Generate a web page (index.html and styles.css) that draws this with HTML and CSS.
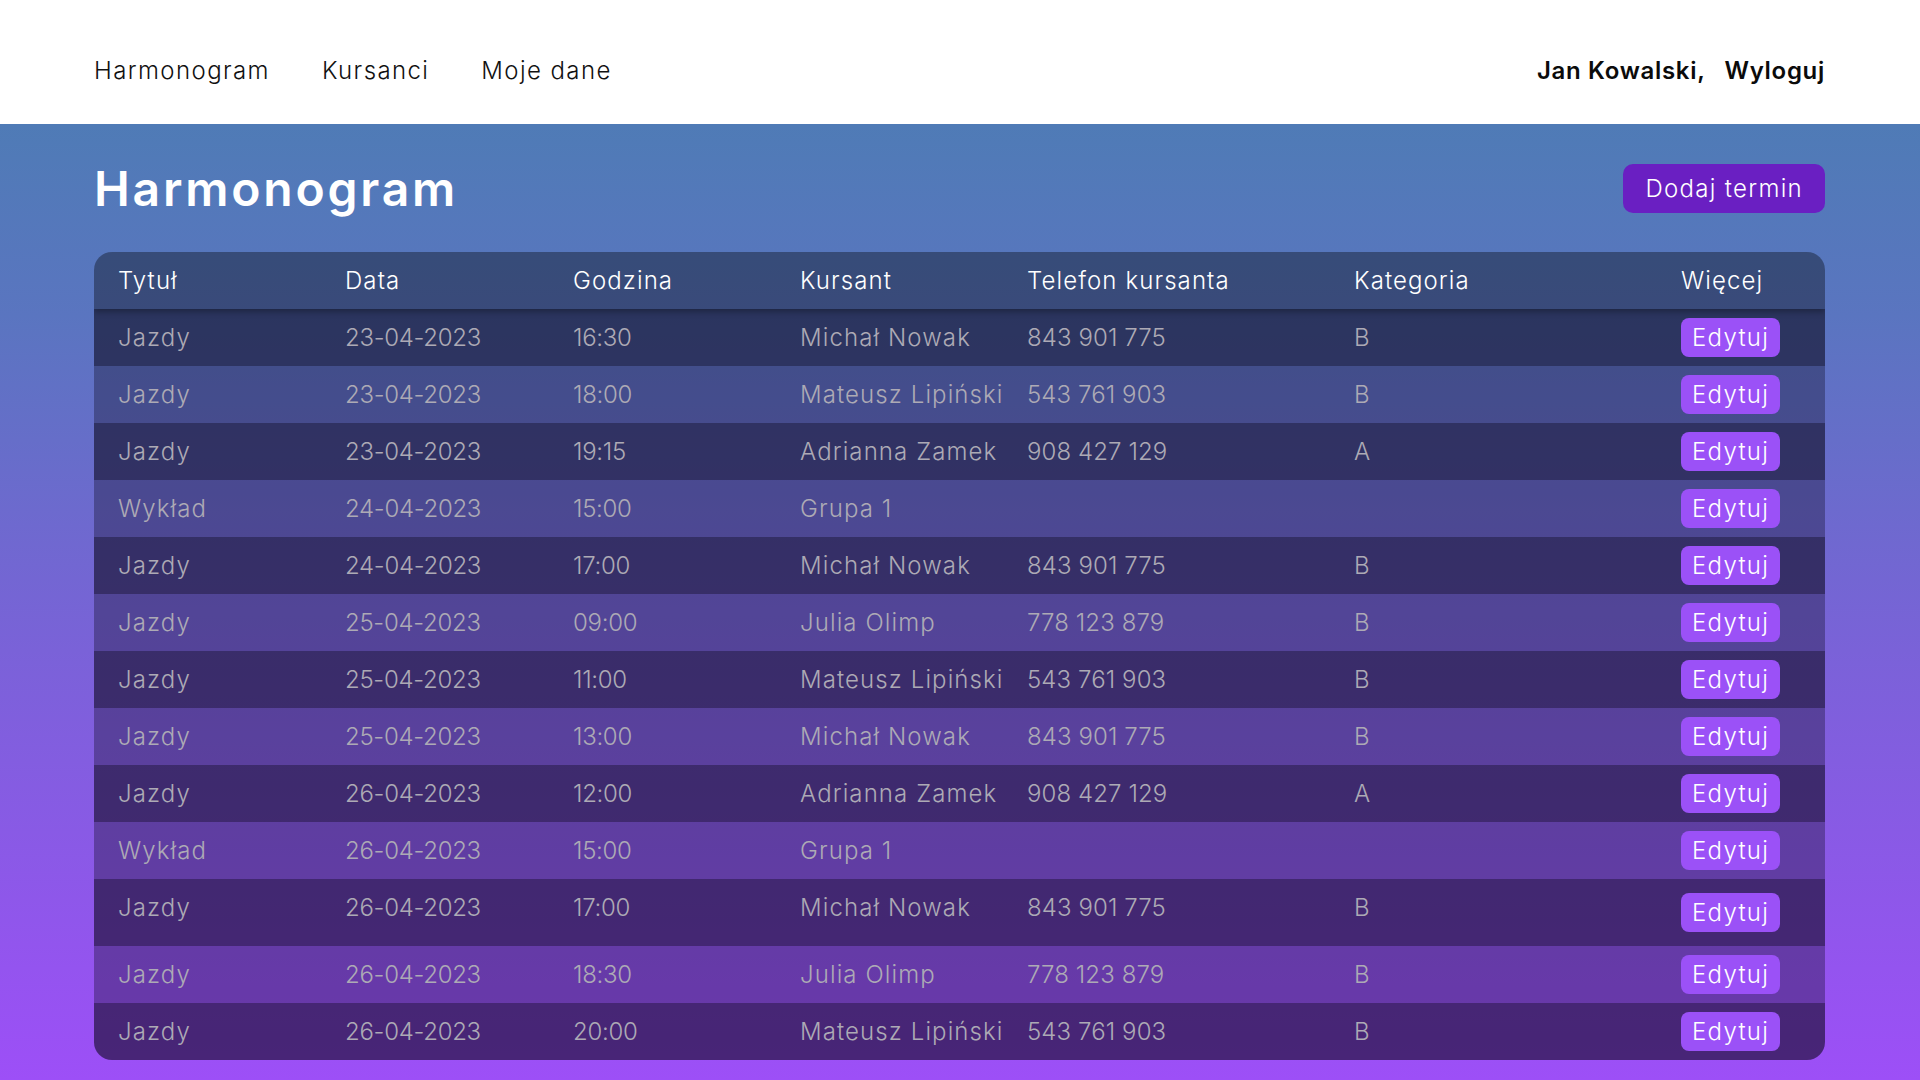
FILE: index.html
```html
<!DOCTYPE html>
<html lang="pl">
<head>
<meta charset="utf-8">
<title>Harmonogram</title>
<link rel="stylesheet" href="styles.css">
</head>
<body>
<header class="topbar">
  <nav class="nav">
    <a class="nav-link" href="#">Harmonogram</a>
    <a class="nav-link" href="#">Kursanci</a>
    <a class="nav-link" href="#">Moje dane</a>
  </nav>
  <div class="user">
    <span class="user-name">Jan Kowalski,</span>
    <a class="logout" href="#">Wyloguj</a>
  </div>
</header>
<main class="content">
  <div class="page-head">
    <h1 class="page-title">Harmonogram</h1>
    <button class="btn-add">Dodaj termin</button>
  </div>
  <div class="schedule">
    <div class="row head">
      <div class="cell">Tytuł</div><div class="cell">Data</div><div class="cell">Godzina</div><div class="cell">Kursant</div><div class="cell">Telefon kursanta</div><div class="cell">Kategoria</div><div class="cell">Więcej</div>
    </div>
    <div class="row dark">
      <div class="cell">Jazdy</div><div class="cell num">23-04-2023</div><div class="cell num">16:30</div><div class="cell">Michał Nowak</div><div class="cell phone">843 901 775</div><div class="cell">B</div><div class="cell action"><button class="btn-edit">Edytuj</button></div>
    </div>
    <div class="row light">
      <div class="cell">Jazdy</div><div class="cell num">23-04-2023</div><div class="cell num">18:00</div><div class="cell">Mateusz Lipiński</div><div class="cell phone">543 761 903</div><div class="cell">B</div><div class="cell action"><button class="btn-edit">Edytuj</button></div>
    </div>
    <div class="row dark">
      <div class="cell">Jazdy</div><div class="cell num">23-04-2023</div><div class="cell num">19:15</div><div class="cell">Adrianna Zamek</div><div class="cell phone">908 427 129</div><div class="cell">A</div><div class="cell action"><button class="btn-edit">Edytuj</button></div>
    </div>
    <div class="row light">
      <div class="cell">Wykład</div><div class="cell num">24-04-2023</div><div class="cell num">15:00</div><div class="cell">Grupa 1</div><div class="cell"></div><div class="cell"></div><div class="cell action"><button class="btn-edit">Edytuj</button></div>
    </div>
    <div class="row dark">
      <div class="cell">Jazdy</div><div class="cell num">24-04-2023</div><div class="cell num">17:00</div><div class="cell">Michał Nowak</div><div class="cell phone">843 901 775</div><div class="cell">B</div><div class="cell action"><button class="btn-edit">Edytuj</button></div>
    </div>
    <div class="row light">
      <div class="cell">Jazdy</div><div class="cell num">25-04-2023</div><div class="cell num">09:00</div><div class="cell">Julia Olimp</div><div class="cell phone">778 123 879</div><div class="cell">B</div><div class="cell action"><button class="btn-edit">Edytuj</button></div>
    </div>
    <div class="row dark">
      <div class="cell">Jazdy</div><div class="cell num">25-04-2023</div><div class="cell num">11:00</div><div class="cell">Mateusz Lipiński</div><div class="cell phone">543 761 903</div><div class="cell">B</div><div class="cell action"><button class="btn-edit">Edytuj</button></div>
    </div>
    <div class="row light">
      <div class="cell">Jazdy</div><div class="cell num">25-04-2023</div><div class="cell num">13:00</div><div class="cell">Michał Nowak</div><div class="cell phone">843 901 775</div><div class="cell">B</div><div class="cell action"><button class="btn-edit">Edytuj</button></div>
    </div>
    <div class="row dark">
      <div class="cell">Jazdy</div><div class="cell num">26-04-2023</div><div class="cell num">12:00</div><div class="cell">Adrianna Zamek</div><div class="cell phone">908 427 129</div><div class="cell">A</div><div class="cell action"><button class="btn-edit">Edytuj</button></div>
    </div>
    <div class="row light">
      <div class="cell">Wykład</div><div class="cell num">26-04-2023</div><div class="cell num">15:00</div><div class="cell">Grupa 1</div><div class="cell"></div><div class="cell"></div><div class="cell action"><button class="btn-edit">Edytuj</button></div>
    </div>
    <div class="row dark tall">
      <div class="cell">Jazdy</div><div class="cell num">26-04-2023</div><div class="cell num">17:00</div><div class="cell">Michał Nowak</div><div class="cell phone">843 901 775</div><div class="cell">B</div><div class="cell action"><button class="btn-edit">Edytuj</button></div>
    </div>
    <div class="row light">
      <div class="cell">Jazdy</div><div class="cell num">26-04-2023</div><div class="cell num">18:30</div><div class="cell">Julia Olimp</div><div class="cell phone">778 123 879</div><div class="cell">B</div><div class="cell action"><button class="btn-edit">Edytuj</button></div>
    </div>
    <div class="row dark">
      <div class="cell">Jazdy</div><div class="cell num">26-04-2023</div><div class="cell num">20:00</div><div class="cell">Mateusz Lipiński</div><div class="cell phone">543 761 903</div><div class="cell">B</div><div class="cell action"><button class="btn-edit">Edytuj</button></div>
    </div>
  </div>
</main>
</body>
</html>
```
FILE: styles.css
```css
* { box-sizing: border-box; }
html, body { margin: 0; padding: 0; }
body {
  width: 1920px;
  height: 1080px;
  overflow: hidden;
  font-family: Inter, "Noto Sans", "DejaVu Sans", sans-serif;
  background: #9d4ff7;
}
.topbar {
  height: 124px;
  background: #ffffff;
  display: flex;
  align-items: center;
  justify-content: space-between;
  padding: 16px 95px 0 94px;
}
.nav { display: flex; gap: 52px; }
.nav-link {
  color: #111;
  text-decoration: none;
  font-size: 24px;
  font-weight: 300;
  letter-spacing: 1.4px;
}
.user { display: flex; gap: 19px; font-size: 24px; font-weight: 600; letter-spacing: 0.7px; color: #0b0b0b; }
.logout { color: #0b0b0b; text-decoration: none; }

.content {
  height: 956px;
  padding: 40px 95px 20px 94px;
  background: linear-gradient(180deg, #4f7bb6 0%, #5a75c0 20%, #7a62d8 55%, #9d4ff7 100%);
}
.page-head {
  display: flex;
  align-items: center;
  justify-content: space-between;
  height: 49px;
  margin-bottom: 39px;
}
.page-title {
  margin: 0;
  color: #fff;
  font-size: 48px;
  font-weight: 600;
  letter-spacing: 2.8px;
  line-height: 49px;
}
.btn-add {
  height: 49px;
  padding: 0 22px;
  border: 0;
  border-radius: 10px;
  background: #6a1fc2;
  color: #fff;
  font-family: inherit;
  font-size: 24px;
  font-weight: 300;
  letter-spacing: 1.3px;
}
.schedule {
  border-radius: 18px;
  overflow: hidden;
}
.row {
  display: grid;
  grid-template-columns: 227px 228px 227px 227px 327px 327px 1fr;
  height: 57px;
}
.cell {
  padding-left: 24px;
  line-height: 57px;
  font-size: 24px;
  font-weight: 300;
  letter-spacing: 1.1px;
  color: #adaab5;
  white-space: nowrap;
}
.num { letter-spacing: -0.3px; }
.phone { letter-spacing: 0.1px; }
.head {
  position: relative;
  z-index: 1;
  background: rgba(0, 0, 0, 0.36);
  box-shadow: 0 3px 6px rgba(0, 0, 0, 0.3);
}
.head .cell { color: #fff; }
.dark { background: rgba(8, 4, 20, 0.56); }
.light { background: rgba(10, 5, 25, 0.33); }
.tall { height: 67px; }
.action { align-self: center; line-height: normal; }
.btn-edit {
  display: block;
  height: 39px;
  padding: 0 11px;
  border: 0;
  border-radius: 8px;
  background: #9b51f7;
  color: #fff;
  font-family: inherit;
  font-size: 24px;
  font-weight: 300;
  letter-spacing: 1.3px;
}
```
